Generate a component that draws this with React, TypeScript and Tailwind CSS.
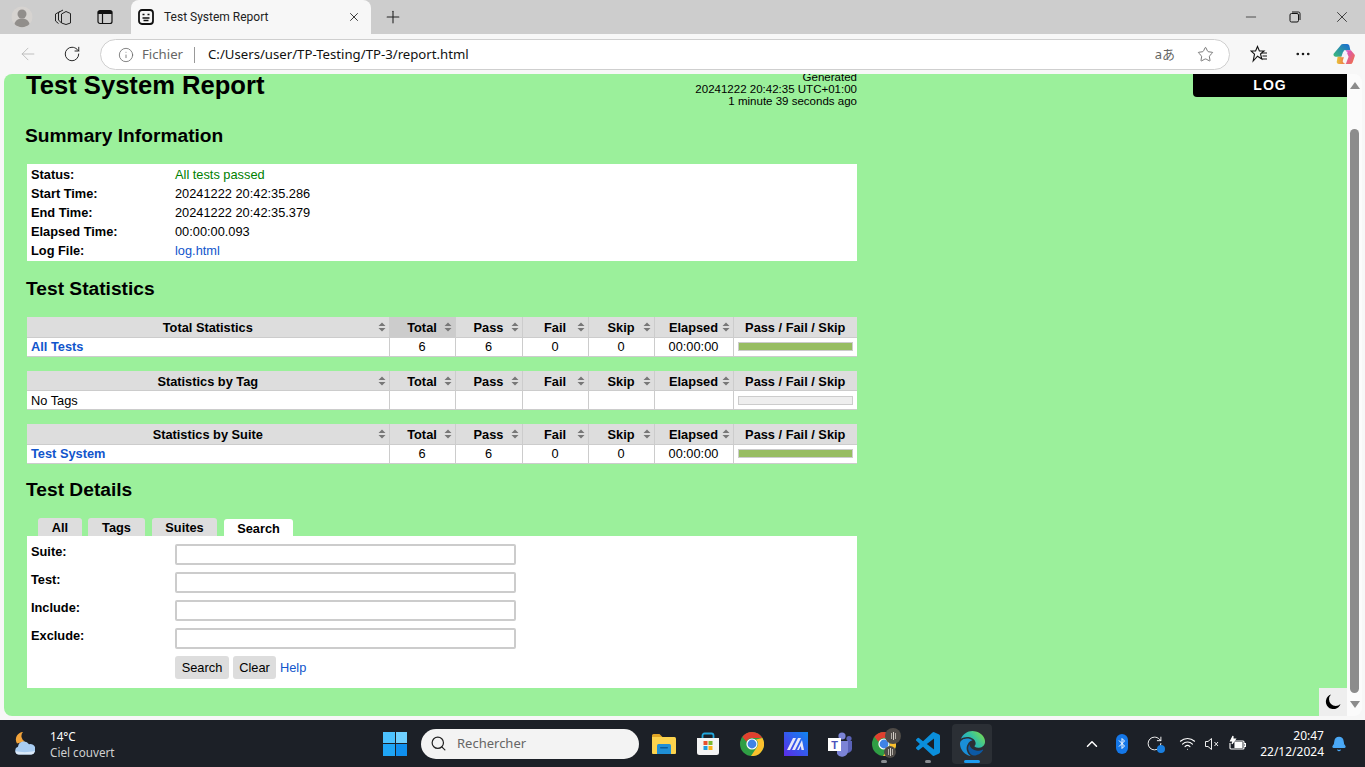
import { ArrowLeft, RotateCw, Info, Star, MoreHorizontal, Minus, X, Plus, ChevronUp, Wifi, Bell, Search } from "lucide-react";

const statCols = ["w-[362px]", "w-[66px]", "w-[67px]", "w-[66px]", "w-[66px]", "w-[79px]", "w-[124px]"];

const SortIcon = () => (
  <svg width="8" height="10" viewBox="0 0 8 10" className="absolute right-[3px] top-[5px]">
    <path d="M4 0.5 7.5 4H.5z M4 9.5 .5 6h7z" fill="#777" />
  </svg>
);

const Bar = ({ full }: { full: boolean }) => (
  <div className={full ? "h-[9px] border border-[#ccc] bg-[#97bd61]" : "h-[9px] border border-[#ccc] bg-[#eee]"} />
);

const StatTable = ({ title, name, link, sorted }: { title: string; name: string; link: boolean; sorted?: boolean }) => {
  const heads = ["Total", "Pass", "Fail", "Skip", "Elapsed"];
  const full = link;
  return (
    <table className="w-[830px] table-fixed border-collapse bg-white text-[12.8px] leading-[15px] text-black">
      <colgroup>
        {statCols.map((c, i) => (
          <col key={i} className={c} />
        ))}
      </colgroup>
      <thead>
        <tr className="h-[20px] bg-[#ddd]">
          <th className="relative border-r border-b border-[#ccc] pt-[2px] font-bold">
            {title}
            <SortIcon />
          </th>
          {heads.map((h) => (
            <th
              key={h}
              className={
                sorted && h === "Total"
                  ? "relative border-r border-b border-[#ccc] bg-[#ccc] pt-[2px] font-bold"
                  : "relative border-r border-b border-[#ccc] pt-[2px] font-bold"
              }
            >
              {h}
              <SortIcon />
            </th>
          ))}
          <th className="border-b border-[#ccc] pt-[2px] font-bold">Pass / Fail / Skip</th>
        </tr>
      </thead>
      <tbody>
        <tr className="h-[19px] border-b border-[#ccc]">
          <td className={link ? "border-r border-[#ccc] pl-1 font-bold text-[#15c]" : "border-r border-[#ccc] pl-1"}>{name}</td>
          <td className="border-r border-[#ccc] text-center">{link ? "6" : ""}</td>
          <td className="border-r border-[#ccc] text-center">{link ? "6" : ""}</td>
          <td className="border-r border-[#ccc] text-center">{link ? "0" : ""}</td>
          <td className="border-r border-[#ccc] text-center">{link ? "0" : ""}</td>
          <td className="border-r border-[#ccc] text-center">{link ? "00:00:00" : ""}</td>
          <td className="px-1">
            <Bar full={full} />
          </td>
        </tr>
      </tbody>
    </table>
  );
};

const summary = [
  ["Status:", "All tests passed", "text-[#008000]"],
  ["Start Time:", "20241222 20:42:35.286", ""],
  ["End Time:", "20241222 20:42:35.379", ""],
  ["Elapsed Time:", "00:00:00.093", ""],
  ["Log File:", "log.html", "text-[#15c]"],
];

const H2 = ({ children, className }: { children: string; className: string }) => (
  <h2 className={"h-6 text-[19.2px] leading-[26px] font-bold text-black " + className}>{children}</h2>
);

const ChromeLogo = ({ size }: { size: number }) => (
  <svg width={size} height={size} viewBox="0 0 24 24">
    <circle cx="12" cy="12" r="12" fill="#2f9e44" />
    <path d="M12 0a12 12 0 0 1 10.4 6H12a6 6 0 0 0-5.6 3.8L2.4 4.8A12 12 0 0 1 12 0z" fill="#e0402f" />
    <path d="M22.4 6A12 12 0 0 1 11 24l6-9a6 6 0 0 0-1-7.5z" fill="#fbc02d" />
    <circle cx="12" cy="12" r="5.6" fill="#fff" />
    <circle cx="12" cy="12" r="4.4" fill="#3f83e6" />
  </svg>
);

const EdgeLogo = ({ size }: { size: number }) => (
  <svg width={size} height={size} viewBox="0 0 24 24">
    <defs>
      <linearGradient id="edgeTop" x1="0" y1="0.8" x2="1" y2="0.2">
        <stop offset="0" stopColor="#1b9de2" />
        <stop offset="0.55" stopColor="#35c1a0" />
        <stop offset="1" stopColor="#7bdc4b" />
      </linearGradient>
    </defs>
    <path d="M21.86 17.86q.14 0 .25.12.1.13.1.25t-.11.33l-.32.46-.43.53-.44.5q-.21.25-.38.42l-.22.23q-.58.53-1.34 1.04-.76.51-1.6.91-.86.4-1.74.64t-1.67.24q-.9 0-1.69-.28-.8-.28-1.48-.78-.68-.5-1.22-1.17-.53-.66-.92-1.44-.38-.77-.58-1.6-.2-.83-.2-1.67 0-1 .32-1.96.33-.97.87-1.8.14.95.55 1.77.41.82 1.02 1.5.6.68 1.38 1.21.78.54 1.64.9.86.36 1.77.56.92.2 1.8.2 1.12 0 2.18-.24 1.06-.23 2.06-.72l.2-.1.2-.05z" fill="#0c59a4" />
    <path d="M6.36 16.59q0 1.1.27 2.15.27 1.06.78 2.03.51.96 1.24 1.77.74.82 1.66 1.4-1.47-.2-2.8-.74-1.33-.55-2.48-1.37-1.15-.83-2.08-1.9-.92-1.07-1.58-2.33T.36 14.94Q0 13.54 0 12.06q0-.81.32-1.49.31-.68.83-1.23.53-.55 1.2-.96.66-.4 1.35-.66.74-.27 1.5-.39.78-.12 1.55-.12.7 0 1.42.1.72.12 1.4.35.68.23 1.32.57.63.35 1.16.83-.35 0-.7.07-.33.07-.65.23v-.02q-.63.28-1.2.74-.57.46-1.05 1.04-.48.58-.87 1.26-.38.67-.65 1.39-.27.71-.42 1.44-.15.72-.15 1.38z" fill="#1a8fd8" />
    <path d="M11.96.06q1.7 0 3.33.39 1.63.38 3.07 1.15 1.43.77 2.62 1.93 1.18 1.16 1.98 2.7.49.94.76 1.96.28 1 .28 2.08 0 .89-.23 1.7-.24.8-.69 1.48-.45.68-1.1 1.22-.64.53-1.45.88-.54.24-1.11.36-.58.13-1.16.13-.42 0-.97-.03-.54-.03-1.1-.12-.55-.1-1.05-.28-.5-.19-.84-.5-.12-.09-.23-.24-.1-.16-.1-.33 0-.15.16-.35.16-.2.35-.5.2-.28.36-.68.16-.4.16-.95 0-1.06-.4-1.96-.4-.91-1.06-1.64-.66-.74-1.52-1.28-.86-.55-1.79-.89-.84-.3-1.72-.44-.87-.14-1.76-.14-1.55 0-3.06.45T.94 7.55q.71-1.74 1.81-3.13 1.1-1.38 2.52-2.35Q6.68 1.1 8.37.58q1.7-.52 3.58-.52Z" fill="url(#edgeTop)" />
  </svg>
);

const VsCode = () => (
  <svg width="24" height="24" viewBox="0 0 24 24">
    <path d="M23.15 2.587L18.21.21a1.494 1.494 0 0 0-1.705.29l-9.46 8.63-4.12-3.128a.999.999 0 0 0-1.276.057L.327 7.261A1 1 0 0 0 .326 8.74L3.899 12 .326 15.26a1 1 0 0 0 .001 1.479L1.65 17.94a.999.999 0 0 0 1.276.057l4.12-3.128 9.46 8.63a1.492 1.492 0 0 0 1.704.29l4.942-2.377A1.5 1.5 0 0 0 24 20.06V3.939a1.5 1.5 0 0 0-.85-1.352zm-5.146 14.861L10.826 12l7.178-5.448v10.896z" fill="#0a8fdc" />
  </svg>
);

const Folder = () => (
  <svg width="24" height="24" viewBox="0 0 24 24">
    <path d="M0 3.500A1.500 1.500 0 0 1 1.500 2h6l3 3H0z" fill="#e0a526" />
    <path d="M0 5h22.500A1.500 1.500 0 0 1 24 6.500V21a1 1 0 0 1-1 1H1a1 1 0 0 1-1-1z" fill="#fcd34d" />
    <path d="M5 13.500A1.500 1.500 0 0 1 6.500 12h11a1.500 1.500 0 0 1 1.500 1.500V22H5z" fill="#1f8fd6" />
    <rect x="8" y="15" width="8" height="1.500" rx=".7" fill="#0b5c99" />
  </svg>
);

const StoreIcon = () => (
  <svg width="24" height="24" viewBox="0 0 24 24">
    <path d="M6.500 6V3.500A2 2 0 0 1 8.500 1.500h7a2 2 0 0 1 2 2V6" fill="none" stroke="#22a7dc" strokeWidth="1.800" />
    <path d="M1 6h22v14.500a2.500 2.500 0 0 1-2.500 2.500h-17A2.500 2.500 0 0 1 1 20.500z" fill="#f4f4f4" />
    <rect x="7.500" y="9" width="4" height="4" fill="#e8502f" />
    <rect x="12.500" y="9" width="4" height="4" fill="#7cb82f" />
    <rect x="7.500" y="14" width="4" height="4" fill="#1e9be0" />
    <rect x="12.500" y="14" width="4" height="4" fill="#fbb117" />
  </svg>
);

const MaLogo = () => (
  <svg width="24" height="24" viewBox="0 0 24 24">
    <defs>
      <linearGradient id="maBg" x1="0" y1="1" x2="1" y2="0">
        <stop offset="0" stopColor="#5b2be8" />
        <stop offset="1" stopColor="#0f86f0" />
      </linearGradient>
    </defs>
    <rect width="24" height="24" fill="url(#maBg)" />
    <path d="M3 18 9 6h3L6 18z M8 18 14 6h3L11 18z M13 18 18 8l2 10h-2.500l-.7-4-2 4z" fill="#e8e8f8" />
  </svg>
);

const Teams = () => (
  <svg width="26" height="26" viewBox="0 0 26 26">
    <circle cx="15" cy="5" r="3.600" fill="#7b83d6" />
    <circle cx="22" cy="7.500" r="2.600" fill="#5a62b8" />
    <path d="M18 10h7v8a4 4 0 0 1-7 2.500z" fill="#5a62b8" />
    <path d="M10 10h11v10a6 6 0 0 1-11 3z" fill="#7b83d6" />
    <rect x="1" y="7" width="13" height="13" fill="#fff" />
    <text x="7.500" y="17.500" textAnchor="middle" fontSize="11" fontWeight="700" fill="#4b53bc" fontFamily="Liberation Sans, sans-serif">T</text>
  </svg>
);

const Copilot = () => (
  <svg width="22" height="22" viewBox="0 0 24 24">
    <defs>
      <linearGradient id="cpA" x1="0" y1="1" x2="1" y2="0">
        <stop offset="0" stopColor="#3dbb78" />
        <stop offset="1" stopColor="#1768d8" />
      </linearGradient>
      <linearGradient id="cpB" x1="0" y1="0" x2="1" y2="1">
        <stop offset="0" stopColor="#d64fd0" />
        <stop offset="1" stopColor="#f2733a" />
      </linearGradient>
      <linearGradient id="cpC" x1="0" y1="0" x2="1" y2="0">
        <stop offset="0" stopColor="#e8c43a" />
        <stop offset="1" stopColor="#ee6a4a" />
      </linearGradient>
    </defs>
    <path d="M8 3a3 3 0 0 1 3-2h4.500a2.500 2.500 0 0 1 2.300 1.700L19 8h-7l-2 7H3a2.500 2.500 0 0 1-2.300-3.400z" fill="url(#cpA)" />
    <path d="M14 8h5.500L23 12a2.500 2.500 0 0 1 .5 3l-2 6a3 3 0 0 1-3 2H14l3-8z" fill="url(#cpB)" />
    <path d="M5 15h7l-1.500 5a4 4 0 0 0 3.500 3H7a3 3 0 0 1-3-2z" fill="url(#cpC)" />
    <path d="M11 9.500h5l-2 6h-5z" fill="#f5eefc" />
  </svg>
);

const Weather = () => (
  <svg width="20" height="24" viewBox="0 0 20 24">
    <path d="M8 0a6 6 0 0 0 2 9.500l-8 2A7.500 7.500 0 0 1 8 0z" fill="#f2a33a" />
    <path d="M4 22.500a4 4 0 0 1-1-7.800 6 6 0 0 1 11-2.500 4.500 4.500 0 0 1 2.500 10.300z" fill="#a9cdf2" />
    <path d="M4 22.500a3.500 3.500 0 0 1-3.500-3.500c5 1.500 13 1.500 19 0a3.500 3.500 0 0 1-3.500 3.500z" fill="#dbe9f8" />
  </svg>
);

const TrayAvatar = ({ className }: { className: string }) => (
  <span className={"absolute flex items-center justify-center gap-px rounded-full bg-[#4f4b47] " + className}>
    <span className="h-[6px] w-px bg-[#b5b0a8]" />
    <span className="h-[8px] w-px bg-[#d5d0c8]" />
    <span className="h-[6px] w-px bg-[#b5b0a8]" />
  </span>
);

const TaskIcon = ({ children, dot }: { children: React.ReactNode; dot?: boolean }) => (
  <div className="relative flex h-10 w-11 items-center justify-center">
    {children}
    {dot && <span className="absolute bottom-[1px] left-[19px] h-[3px] w-[6px] rounded-full bg-[#8a8d92]" />}
  </div>
);

export default function App() {
  return (
    <div className="flex h-[767px] w-[1365px] flex-col overflow-hidden bg-[#f7f7f7] font-['Liberation_Sans',Arial,sans-serif]">
      {/* tab strip */}
      <div className="flex h-[34px] items-end bg-[#cdcdcd] text-black">
        <div className="flex h-[34px] w-[44px] items-center justify-center">
          <svg width="22" height="22" viewBox="0 0 22 22">
            <circle cx="11" cy="11" r="10.500" fill="#d6d3d0" />
            <circle cx="11" cy="8" r="4.500" fill="#918e8b" />
            <path d="M3.500 18c1-4 4-5.500 7.500-5.500s6.500 1.500 7.500 5.500a10.500 10.500 0 0 1-15 0z" fill="#918e8b" />
          </svg>
        </div>
        <div className="flex h-[34px] w-[38px] items-center justify-center">
          <svg width="18" height="18" viewBox="0 0 18 18" fill="none" stroke="#222" strokeWidth="1">
            <path d="M6 3.500 1.500 6v7l3 2.500" />
            <path d="M9 2 4.500 4.500V12l3 3" />
            <path d="M7.500 6 12 3.500l4.500 2V15L12 16.500 7.500 15z" />
          </svg>
        </div>
        <div className="flex h-[34px] w-[46px] items-center justify-center">
          <svg width="16" height="16" viewBox="0 0 16 16" fill="none" stroke="#111" strokeWidth="1.200">
            <rect x="1" y="1.500" width="14" height="13" rx="2" />
            <path d="M1 4.500h14M5.500 4.500v10" />
            <path d="M1.500 2.500h13v2h-13z" fill="#111" />
          </svg>
        </div>
        <div className="mr-[12px] ml-[3px] flex h-[34px] w-[240px] items-center rounded-t-lg bg-[#f7f7f7] pr-[10px] pl-[7px]">
          <svg width="16" height="16" viewBox="0 0 16 16" fill="none" stroke="#111">
            <rect x="1" y="1" width="14" height="14" rx="3" strokeWidth="1.800" />
            <path d="M4.500 5.500h2M9.500 5.500h2M4.500 9h7M5.500 11.500h5" strokeWidth="1.300" />
          </svg>
          <span className="ml-[10px] flex-1 font-['Roboto',sans-serif] text-[12px] text-[#222]">Test System Report</span>
          <X size={14} strokeWidth={1.500} color="#222" />
        </div>
        <div className="flex h-[34px] w-[20px] items-center justify-center">
          <Plus size={20} strokeWidth={1.300} color="#222" />
        </div>
        <div className="flex-1" />
        <div className="flex h-[34px] items-center gap-[30px] pr-[14px]">
          <Minus size={16} strokeWidth={1} color="#111" />
          <svg width="12" height="12" viewBox="0 0 12 12" fill="none" stroke="#111" strokeWidth="1">
            <rect x="1" y="2.500" width="8.500" height="8.500" rx="1.500" />
            <path d="M3 1h6.500A1.500 1.500 0 0 1 11 2.500V9" />
          </svg>
          <X size={18} strokeWidth={1} color="#111" className="ml-[2px]" />
        </div>
      </div>

      {/* address bar */}
      <div className="flex h-[40px] items-center">
        <div className="flex w-[100px] items-center">
          <ArrowLeft size={20} strokeWidth={1} color="#b5b5b5" className="ml-[18px]" />
          <RotateCw size={18} strokeWidth={1.300} color="#222" className="ml-[25px]" />
        </div>
        <div className="flex h-[31px] w-[1130px] items-center rounded-full border border-[#cfcfcf] bg-white pt-px pr-[15px] pl-[17px]">
          <Info size={16} strokeWidth={1.200} color="#666" />
          <span className="ml-[8px] font-['Noto_Sans',sans-serif] text-[13.2px] text-[#666]">Fichier</span>
          <span className="ml-[11px] h-[16px] w-px bg-[#999]" />
          <span className="ml-[13px] flex-1 font-['Noto_Sans',sans-serif] text-[13.2px] text-[#111]">C:/Users/user/TP-Testing/TP-3/report.html</span>
          <span className="font-['Noto_Sans','Noto_Sans_CJK_JP',sans-serif] text-[13px] text-[#666]">aあ</span>
          <Star size={17} strokeWidth={1.100} color="#555" className="ml-[22px]" />
        </div>
        <div className="flex flex-1 items-center">
          <svg width="18" height="18" viewBox="0 0 18 18" fill="none" stroke="#111" strokeWidth="1.100" className="ml-[20px]">
            <path d="M7.500 1.500 9.400 6H14l-3.500 3 1.300 5-4.300-2.800L3.200 16l1.300-6.800L1 6h4.600z" />
            <path d="M12 8h5M12.500 11h4.500M12 14h5" />
          </svg>
          <MoreHorizontal size={18} strokeWidth={1.500} color="#111" className="ml-[26px]" />
          <span className="ml-[21px] flex">
            <Copilot />
          </span>
        </div>
      </div>

      {/* page */}
      <div className="flex h-[646px] items-start">
        <div className="relative ml-[4px] h-[642px] w-[1343px] overflow-hidden rounded-l-lg bg-[#9bf09b] pl-[22px]">
          <div className="-mt-[3px] flex h-[36px] w-[831px] items-start justify-between">
            <h1 className="-mt-px text-[25.6px] leading-[30px] font-bold text-black">Test System Report</h1>
            <div className="text-right text-[11.52px] leading-[12px] text-black">
              <div>Generated</div>
              <div>20241222 20:42:35 UTC+01:00</div>
              <div>1 minute 39 seconds ago</div>
            </div>
          </div>

          <H2 className="-ml-px mt-[16px]">Summary Information</H2>

          <div className="mt-[17px] ml-px w-[830px] bg-white py-[1px] text-[12.8px] leading-[19px] text-black">
            {summary.map(([k, v, c]) => (
              <div key={k} className="flex h-[19px]">
                <span className="w-[148px] pl-1 font-bold">{k}</span>
                <span className={c}>{v}</span>
              </div>
            ))}
          </div>

          <H2 className="mt-[15px]">Test Statistics</H2>

          <div className="mt-[17px] ml-px flex flex-col gap-[14px]">
            <StatTable title="Total Statistics" name="All Tests" link sorted />
            <StatTable title="Statistics by Tag" name="No Tags" link={false} />
            <StatTable title="Statistics by Suite" name="Test System" link />
          </div>

          <H2 className="mt-[13px]">Test Details</H2>

          <div className="mt-[17px] ml-px flex h-[18px] items-end pl-[11px] text-[12.8px] leading-[17px] font-bold text-black">
            <span className="mr-[6px] flex h-[18px] w-[44px] items-center justify-center rounded-t-[3px] bg-[#ddd] pt-px">All</span>
            <span className="mr-[7px] flex h-[18px] w-[57px] items-center justify-center rounded-t-[3px] bg-[#ddd] pt-px">Tags</span>
            <span className="mr-[7px] flex h-[18px] w-[65px] items-center justify-center rounded-t-[3px] bg-[#ddd] pt-px">Suites</span>
            <span className="flex h-[17px] w-[69px] items-center justify-center rounded-t-[3px] bg-white pt-[2px]">Search</span>
          </div>
          <div className="ml-px h-[152px] w-[830px] bg-white pt-[8px] text-[12.8px] text-black">
            {["Suite:", "Test:", "Include:", "Exclude:"].map((l) => (
              <div key={l} className="mb-[7px] flex h-[21px]">
                <span className="w-[148px] pl-1 leading-[15px] font-bold">{l}</span>
                <div className="h-[21px] w-[341px] rounded-[2px] border-2 border-[#ccc] bg-white" />
              </div>
            ))}
            <div className="flex h-[23px] items-center pl-[148px]">
              <span className="flex h-[23px] w-[54px] items-center justify-center rounded-[3px] bg-[#ddd] pt-[2px]">Search</span>
              <span className="ml-[4px] flex h-[23px] w-[43px] items-center justify-center rounded-[3px] bg-[#ddd] pt-[2px]">Clear</span>
              <span className="ml-[4px] pt-[2px] text-[#15c]">Help</span>
            </div>
          </div>

          <div className="absolute top-0 right-0 flex h-[23px] w-[154px] items-center justify-center rounded-bl-[4px] bg-black text-[14px] font-bold tracking-[1px] text-white">
            LOG
          </div>
          <div className="absolute right-0 bottom-0 flex h-[28px] w-[28px] items-center justify-center bg-[#eee]">
            <svg width="16" height="16" viewBox="0 0 16 16">
              <path d="M6 .5a7.500 7.500 0 1 0 9.500 9.500A6.500 6.500 0 0 1 6 .5z" fill="#000" />
            </svg>
          </div>
        </div>
        <div className="relative h-[642px] w-[15px] rounded-r-lg bg-[#fbfbfb]">
          <svg width="10" height="7" viewBox="0 0 10 7" className="absolute top-[8px] left-[3px]">
            <path d="M5 0 10 7H0z" fill="#8c8c8c" />
          </svg>
          <div className="absolute top-[55px] left-[3px] h-[564px] w-[9px] rounded-full bg-[#8c8c8c]" />
          <svg width="10" height="7" viewBox="0 0 10 7" className="absolute bottom-[8px] left-[3px]">
            <path d="M5 7 10 0H0z" fill="#8c8c8c" />
          </svg>
        </div>
      </div>

      {/* taskbar */}
      <div className="flex h-[47px] items-center bg-[#1c2027] font-['Noto_Sans',sans-serif] text-white">
        <div className="flex w-[383px] items-center pl-[15px]">
          <Weather />
          <div className="ml-[15px] pt-px text-[11.7px] leading-[16px]">
            <div>14°C</div>
            <div className="text-[#d0d0d0]">Ciel couvert</div>
          </div>
        </div>
        <div className="grid h-[24px] w-[24px] grid-cols-2 gap-[1px]">
          <span className="bg-[#4cc2ff]" />
          <span className="bg-[#6fd0ff]" />
          <span className="bg-[#1fa5f5]" />
          <span className="bg-[#0f8fee]" />
        </div>
        <div className="ml-[14px] flex h-[30px] w-[218px] items-center rounded-full bg-[#f3f3f3] pl-[9px]">
          <Search size={17} strokeWidth={1.700} color="#222" />
          <span className="ml-[10px] text-[13px] text-[#666]">Rechercher</span>
        </div>
        <div className="ml-[3px] flex items-center">
          <TaskIcon>
            <Folder />
          </TaskIcon>
          <TaskIcon>
            <StoreIcon />
          </TaskIcon>
          <TaskIcon>
            <ChromeLogo size={24} />
          </TaskIcon>
          <TaskIcon>
            <MaLogo />
          </TaskIcon>
          <TaskIcon>
            <Teams />
          </TaskIcon>
          <TaskIcon dot>
            <ChromeLogo size={24} />
            <TrayAvatar className="top-[4px] left-[23px] h-[16px] w-[16px]" />
            <TrayAvatar className="top-[22px] left-[22px] h-[12px] w-[12px]" />
          </TaskIcon>
          <TaskIcon dot>
            <VsCode />
          </TaskIcon>
          <div className="relative ml-[2px] flex h-10 w-10 items-center justify-center rounded-[4px] bg-[#2b2f35]">
            <EdgeLogo size={25} />
            <span className="absolute bottom-[1px] left-[12px] h-[3px] w-[16px] rounded-full bg-[#1c9bf0]" />
          </div>
        </div>
        <ChevronUp size={18} strokeWidth={2} className="ml-[91px]" />
        <div className="ml-[15px] flex h-[20px] w-[12px] items-center justify-center rounded-full bg-[#1477e8]">
          <svg width="8" height="13" viewBox="0 0 8 13" fill="none" stroke="#fff" strokeWidth="1">
            <path d="M1 3.500 6.500 9 4 11.500v-10L6.500 4 1 9.500" />
          </svg>
        </div>
        <div className="relative ml-[18px] h-[18px] w-[18px]">
          <RotateCw size={17} strokeWidth={1.300} />
          <span className="absolute right-[-1px] bottom-0 h-[8px] w-[8px] rounded-full bg-[#1a7fe0]" />
        </div>
        <Wifi size={17} strokeWidth={1.500} className="ml-[15px]" />
        <svg width="16" height="16" viewBox="0 0 16 16" fill="none" stroke="#eee" strokeWidth="1" className="ml-[8px]">
          <path d="M1.500 5.500h2.500L7.500 2.500v11L4 10.500H1.500z" />
          <path d="M10.500 6 14 10M14 6l-3.500 4" />
        </svg>
        <svg width="17" height="17" viewBox="0 0 17 17" fill="none" stroke="#fff" strokeWidth="1.100" className="ml-[9px]">
          <path d="M4 6h10a1 1 0 0 1 1 1v6a1 1 0 0 1-1 1H2a1 1 0 0 1-1-1V8" />
          <path d="M15 8.500h1.500v3H15" />
          <path d="M4 1 1.500 6H4L3 9l3.500-5H4z" fill="#fff" />
          <rect x="6" y="7.500" width="7" height="5" fill="#fff" />
        </svg>
        <div className="ml-[10px] w-[68px] pt-px text-right text-[12px] leading-[16px] whitespace-nowrap">
          <div>20:47</div>
          <div>22/12/2024</div>
        </div>
        <Bell size={16} color="#4aa8f5" fill="#4aa8f5" className="ml-[7px]" />
      </div>
    </div>
  );
}
